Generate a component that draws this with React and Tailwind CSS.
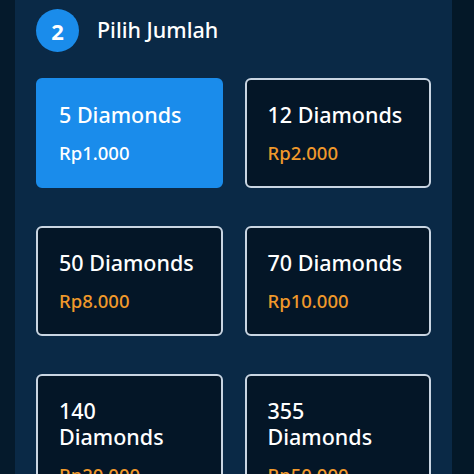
import React from 'react';

const packs = [
  { label: '5 Diamonds', price: 'Rp1.000', active: true },
  { label: '12 Diamonds', price: 'Rp2.000' },
  { label: '50 Diamonds', price: 'Rp8.000' },
  { label: '70 Diamonds', price: 'Rp10.000' },
  { label: '140 Diamonds', price: 'Rp20.000' },
  { label: '355 Diamonds', price: 'Rp50.000' },
];

const PackCard = ({ pack }) => {
  const base = 'rounded-[6px] border-2 px-[21px] pt-[22px] pb-[19px] min-h-[110px]';
  const look = pack.active
    ? 'bg-[#1a8ceb] border-[#1a8ceb]'
    : 'bg-[#041627] border-[#c9d5e2]';

  return (
    <button className={`${base} ${look} text-left flex flex-col items-start`}>
      <span className="text-[21.5px] leading-[26px] font-medium text-white">{pack.label}</span>
      <span
        className={`mt-3 text-[18.5px] leading-[26px] font-medium ${pack.active ? 'text-white' : 'text-[#f0992b]'}`}
      >
        {pack.price}
      </span>
    </button>
  );
};

export default function App() {
  return (
    <div
      className="h-[474px] w-[474px] overflow-hidden bg-[#051a2c] flex"
      style={{ fontFamily: '"Noto Sans", "Open Sans", sans-serif' }}
    >
      <div className="ml-[15px] w-[437px] bg-[#0a2946] pt-[9px] px-[21px]">
        <div className="flex items-center gap-[18px]">
          <div className="w-[43px] h-[43px] rounded-full bg-[#1a8ceb] flex items-center justify-center">
            <span className="text-white text-[22px] font-bold leading-none">2</span>
          </div>
          <h2 className="text-white text-[21.5px] font-medium">Pilih Jumlah</h2>
        </div>

        <div className="mt-[26px] grid grid-cols-2 gap-x-[22px] gap-y-[38px]">
          {packs.map((pack) => (
            <PackCard key={pack.label} pack={pack} />
          ))}
        </div>
      </div>
      <div className="flex-1 bg-[#041828]" />
    </div>
  );
}
